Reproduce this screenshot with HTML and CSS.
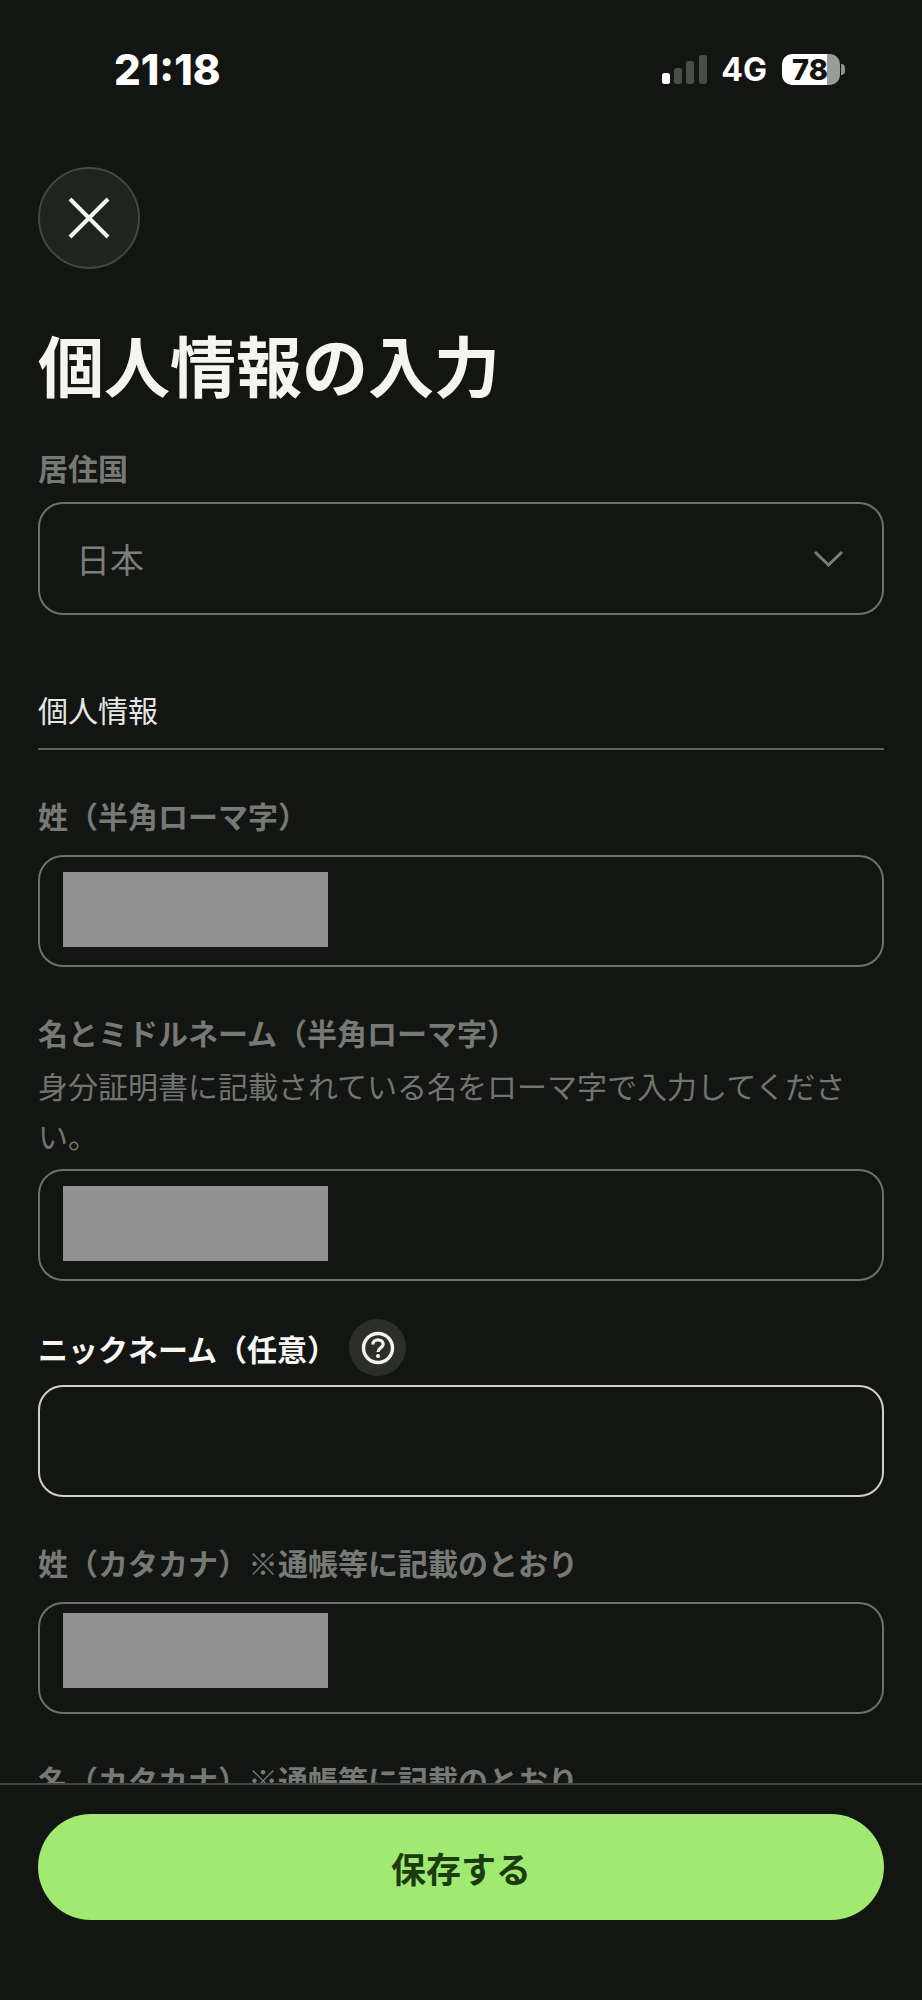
FILE: index.html
```html
<!DOCTYPE html>
<html lang="ja">
<head>
  <meta charset="UTF-8">
  <meta name="viewport" content="width=device-width, initial-scale=1.0">
  <title>個人情報の入力</title>
  <link rel="stylesheet" href="styles.css">
</head>
<body>
  <div class="screen">

    <header class="status">
      <span class="status__time">21:18</span>
      <div class="status__right">
        <svg class="signal" width="45" height="29" viewBox="0 0 45 29">
          <rect class="signal__on" x="0" y="18" width="8" height="11" rx="2.5"/>
          <rect class="signal__off" x="12" y="13" width="8" height="16" rx="2.5"/>
          <rect class="signal__off" x="24" y="6" width="8" height="23" rx="2.5"/>
          <rect class="signal__off" x="37" y="0" width="8" height="29" rx="2.5"/>
        </svg>
        <span class="status__net">4G</span>
        <div class="battery">
          <span class="battery__level">78</span>
        </div>
        <span class="battery__tip"></span>
      </div>
    </header>

    <main class="content">
      <button class="close" aria-label="閉じる">
        <svg width="44" height="44" viewBox="0 0 44 44">
          <path d="M3 3 L41 41 M41 3 L3 41" fill="none" stroke="#f2f4ee" stroke-width="4"/>
        </svg>
      </button>

      <h1 class="title">個人情報の入力</h1>

      <div class="field field--first">
        <label class="label">居住国</label>
        <div class="input input--select">
          <span>日本</span>
          <svg width="31" height="17" viewBox="0 0 31 17">
            <path d="M2 2 L15.5 15 L29 2" fill="none" stroke="#7b7d7a" stroke-width="3"/>
          </svg>
        </div>
      </div>

      <h2 class="section">個人情報</h2>

      <div class="field">
        <label class="label">姓（半角ローマ字）</label>
        <div class="input"><span class="redacted"></span></div>
      </div>

      <div class="field">
        <label class="label">名とミドルネーム（半角ローマ字）</label>
        <p class="hint">身分証明書に記載されている名をローマ字で入力してください。</p>
        <div class="input"><span class="redacted"></span></div>
      </div>

      <div class="field field--active">
        <div class="label-row">
          <label class="label">ニックネーム（任意）</label>
          <button class="help" aria-label="ヘルプ">
            <svg width="34" height="34" viewBox="0 0 34 34">
              <circle cx="17" cy="17" r="14.5" fill="none" stroke="#f4f4f2" stroke-width="3.4"/>
              <path d="M11.8 13.4 C11.8 10.4 14.2 8.8 17 8.8 C19.9 8.8 22.2 10.5 22.2 13.2 C22.2 16.8 17 16.9 17 21" fill="none" stroke="#f4f4f2" stroke-width="3.2"/>
              <circle cx="17" cy="25" r="2" fill="#f4f4f2"/>
            </svg>
          </button>
        </div>
        <div class="input"></div>
      </div>

      <div class="field">
        <label class="label">姓（カタカナ）※通帳等に記載のとおり</label>
        <div class="input"><span class="redacted redacted--high"></span></div>
      </div>

      <div class="field">
        <label class="label">名（カタカナ）※通帳等に記載のとおり</label>
      </div>
    </main>

    <footer class="footer">
      <button class="save">保存する</button>
    </footer>

  </div>
</body>
</html>
```

FILE: styles.css
```css
* {
  box-sizing: border-box;
  margin: 0;
  padding: 0;
}
:root {
  --bg: #131513;
  --muted: #7b7d7a;
  --border: #6e706d;
  --green: #a0ea72;
}
html, body {
  background: var(--bg);
}
body {
  font-family: "Noto Sans CJK JP", "Noto Sans", sans-serif;
  color: var(--muted);
}
button {
  font-family: inherit;
  border: 0;
}

.screen {
  display: flex;
  flex-direction: column;
  height: 2000px;
  overflow: hidden;
}

/* Status bar */

.status {
  flex: none;
  display: flex;
  justify-content: space-between;
  align-items: center;
  height: 167px;
  padding: 0 77px 29px 114px;
}
.status__time {
  font-family: Inter, "Liberation Sans", sans-serif;
  font-size: 42px;
  font-weight: 800;
  color: #fff;
}
.status__right {
  display: flex;
  align-items: center;
}
.signal__on {
  fill: #fff;
}
.signal__off {
  fill: #4a4c4a;
}
.status__net {
  margin-left: 14px;
  margin-right: 15px;
  font-family: Inter, "Liberation Sans", sans-serif;
  font-size: 32px;
  font-weight: 700;
  color: #fff;
}
.battery {
  display: flex;
  align-items: center;
  width: 58px;
  height: 31px;
  padding-left: 10px;
  border-radius: 10px;
  background: linear-gradient(to right, #fff 45px, #999b99 45px);
}
.battery__level {
  font-family: Inter, "Liberation Sans", sans-serif;
  font-size: 29px;
  font-weight: 800;
  color: #131513;
}
.battery__tip {
  width: 4px;
  height: 11px;
  margin-left: 1px;
  border-radius: 0 6px 6px 0;
  background: #8f918f;
}

/* Form */

.content {
  flex: 1;
  min-height: 0;
  overflow: hidden;
  padding: 0 38px;
}
.close {
  display: flex;
  align-items: center;
  justify-content: center;
  width: 102px;
  height: 102px;
  border: 2px solid #444744;
  border-radius: 50%;
  background: #1f2420;
}
.title {
  margin-top: 45px;
  font-size: 66px;
  line-height: 98px;
  font-weight: 700;
  color: #f4f5f2;
}
.field {
  margin-top: 43px;
}
.field--first {
  margin-top: 33px;
}
.field--active {
  margin-top: 38px;
}
.label {
  display: block;
  font-size: 30px;
  line-height: 44px;
  font-weight: 700;
  color: #777976;
}
.label-row {
  display: flex;
  align-items: center;
  gap: 12px;
  height: 57px;
}
.field--active .label {
  color: #f6f6f4;
}
.field--active .input {
  margin-top: 9px;
  border-color: #cfd0cc;
}
.hint {
  margin-top: 6px;
  font-size: 30px;
  line-height: 50px;
  color: #727471;
}
.hint + .input {
  margin-top: 9px;
}
.input {
  display: flex;
  align-items: center;
  height: 112px;
  margin-top: 18px;
  padding: 0 23px;
  border: 2px solid var(--border);
  border-radius: 25px;
}
.input--select {
  justify-content: space-between;
  height: 113px;
  margin-top: 13px;
  padding: 0 38px 0 36px;
  font-size: 34px;
  color: var(--muted);
}
.redacted {
  width: 265px;
  height: 75px;
  margin-bottom: 4px;
  background: #929292;
}
.redacted--high {
  margin-bottom: 15px;
}
.section {
  margin-top: 72px;
  padding-bottom: 17px;
  border-bottom: 2px solid #5f615f;
  font-size: 30px;
  line-height: 44px;
  font-weight: 400;
  color: #e6e7e4;
}
.help {
  display: flex;
  align-items: center;
  justify-content: center;
  width: 57px;
  height: 57px;
  border-radius: 50%;
  background: #2c2e2c;
}

/* Footer */

.footer {
  flex: none;
  height: 217px;
  padding: 29px 38px 0;
  border-top: 2px solid #434543;
  background: var(--bg);
}
.save {
  display: block;
  width: 100%;
  height: 106px;
  border-radius: 53px;
  background: var(--green);
  font-size: 35px;
  font-weight: 700;
  color: #1c3b10;
}
```
